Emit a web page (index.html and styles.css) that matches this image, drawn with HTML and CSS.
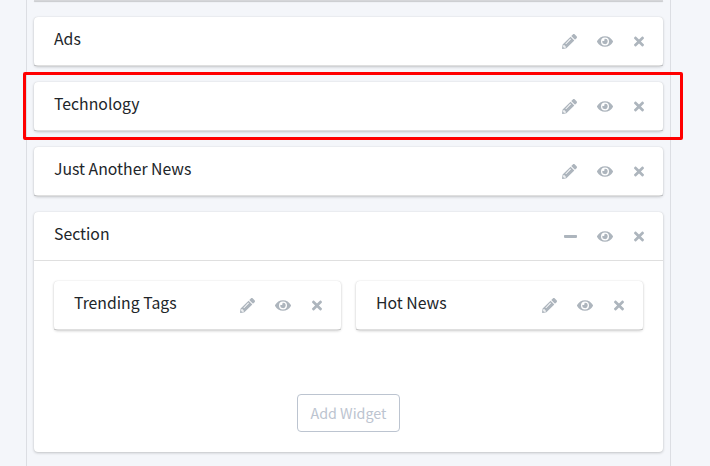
FILE: index.html
```html
<!DOCTYPE html>
<html lang="en">
<head>
<meta charset="utf-8">
<title>Widgets</title>
<link rel="stylesheet" href="styles.css">
</head>
<body>
<svg class="sprite" aria-hidden="true">
  <symbol id="pencil" viewBox="0 0 512 512"><path d="M497.9 142.1l-46.1 46.1c-4.7 4.7-12.3 4.7-17 0l-111-111c-4.7-4.7-4.7-12.3 0-17l46.1-46.1c18.7-18.7 49.1-18.7 67.9 0l60.1 60.1c18.8 18.7 18.8 49.1 0 67.9zM284.2 99.8L21.6 362.4.4 483.9c-2.9 16.4 11.4 30.6 27.8 27.8l121.5-21.3 262.6-262.6c4.7-4.7 4.7-12.3 0-17l-111-111c-4.8-4.7-12.4-4.7-17.1 0zM124.1 339.9c-5.5-5.5-5.5-14.3 0-19.8l154-154c5.5-5.5 14.3-5.5 19.8 0s5.5 14.3 0 19.8l-154 154c-5.5 5.5-14.3 5.5-19.8 0zM88 424h48v36.3l-64.5 11.3-31.1-31.1L51.7 376H88v48z"/></symbol>
  <symbol id="eye" viewBox="0 0 576 512"><path d="M572.52 241.4C518.29 135.59 410.93 64 288 64S57.68 135.64 3.48 241.41a32.35 32.35 0 0 0 0 29.19C57.71 376.41 165.07 448 288 448s230.32-71.64 284.52-177.41a32.35 32.35 0 0 0 0-29.19zM288 400a144 144 0 1 1 144-144 143.93 143.93 0 0 1-144 144zm0-240a95.31 95.31 0 0 0-25.31 3.79 47.85 47.85 0 0 1-66.9 66.9A95.78 95.78 0 1 0 288 160z"/></symbol>
  <symbol id="times" viewBox="0 0 352 512"><path d="M242.72 256l100.07-100.07c12.28-12.28 12.28-32.19 0-44.48l-22.24-22.24c-12.28-12.28-32.19-12.28-44.48 0L176 189.28 75.93 89.21c-12.28-12.28-32.19-12.28-44.48 0L9.21 111.45c-12.28 12.28-12.28 32.19 0 44.48L109.28 256 9.21 356.07c-12.28 12.28-12.28 32.19 0 44.48l22.24 22.24c12.28 12.28 32.2 12.28 44.48 0L176 322.72l100.07 100.07c12.28 12.28 32.2 12.28 44.48 0l22.24-22.24c12.28-12.28 12.28-32.19 0-44.48L242.72 256z"/></symbol>
  <symbol id="minus" viewBox="0 0 448 512"><path d="M416 208H32c-17.67 0-32 14.33-32 32v32c0 17.67 14.33 32 32 32h384c17.67 0 32-14.33 32-32v-32c0-17.67-14.33-32-32-32z"/></symbol>
</svg>
<main class="area">
  <div class="card card-cut"></div>
  <div class="card">
    <div class="card-header"><h3>Ads</h3>
      <div class="tools"><svg class="icon"><use href="#pencil"/></svg><svg class="icon icon-eye"><use href="#eye"/></svg><svg class="icon icon-times"><use href="#times"/></svg></div>
    </div>
  </div>
  <div class="card marked">
    <div class="card-header"><h3>Technology</h3>
      <div class="tools"><svg class="icon"><use href="#pencil"/></svg><svg class="icon icon-eye"><use href="#eye"/></svg><svg class="icon icon-times"><use href="#times"/></svg></div>
    </div>
  </div>
  <div class="card">
    <div class="card-header"><h3>Just Another News</h3>
      <div class="tools"><svg class="icon"><use href="#pencil"/></svg><svg class="icon icon-eye"><use href="#eye"/></svg><svg class="icon icon-times"><use href="#times"/></svg></div>
    </div>
  </div>
  <div class="card">
    <div class="card-header"><h3>Section</h3>
      <div class="tools"><svg class="icon icon-minus"><use href="#minus"/></svg><svg class="icon icon-eye"><use href="#eye"/></svg><svg class="icon icon-times"><use href="#times"/></svg></div>
    </div>
    <div class="card-body">
      <div class="columns">
        <div class="card">
          <div class="card-header"><h3>Trending Tags</h3>
            <div class="tools"><svg class="icon"><use href="#pencil"/></svg><svg class="icon icon-eye"><use href="#eye"/></svg><svg class="icon icon-times"><use href="#times"/></svg></div>
          </div>
        </div>
        <div class="card">
          <div class="card-header"><h3>Hot News</h3>
            <div class="tools"><svg class="icon"><use href="#pencil"/></svg><svg class="icon icon-eye"><use href="#eye"/></svg><svg class="icon icon-times"><use href="#times"/></svg></div>
          </div>
        </div>
      </div>
      <button class="add" type="button">Add Widget</button>
    </div>
  </div>
</main>
</body>
</html>
```
FILE: styles.css
```css
* { box-sizing: border-box; }

body {
  margin: 0;
  height: 466px;
  overflow: hidden;
  background: #f4f6fa;
  color: #212529;
  font-family: "Noto Sans CJK SC", "Open Sans", sans-serif;
}

.sprite { display: none; }

.area {
  display: flex;
  flex-direction: column;
  gap: 16px;
  width: 645px;
  height: 466px;
  margin-left: 26px;
  padding: 0 7px;
  border: solid #dcdee3;
  border-width: 0 1px;
}

.card {
  flex: none;
  position: relative;
  background: #fff;
  border-radius: 4px;
  box-shadow: 0 0 1px rgba(0, 0, 0, .125), 0 1px 3px rgba(0, 0, 0, .2);
}

.card-cut {
  height: 1px;
  background: #d5d6d9;
  border-radius: 0;
  box-shadow: 0 1px 1px rgba(0, 0, 0, .2);
}

.card-header {
  display: flex;
  justify-content: space-between;
  height: 49px;
  padding: 0 19px 0 20px;
  border-bottom: 1px solid rgba(0, 0, 0, .125);
}

.card-header h3 {
  margin: 0;
  font-size: 15.8px;
  font-weight: 400;
  line-height: 44px;
}

.tools {
  display: flex;
  align-items: center;
  gap: 21px;
  padding-top: 1px;
  color: #adb5bd;
}

.icon {
  display: block;
  width: 15px;
  height: 15px;
  margin-right: -1px;
  fill: currentColor;
}

.icon-eye { width: 16px; margin-right: 0; }
.icon-times { width: 10px; margin-right: 0; }
.icon-minus { width: 13px; margin-right: -1px; }

/* Red frame drawn around the highlighted widget */
.marked::after {
  content: "";
  position: absolute;
  z-index: 1;
  inset: -10px -20px -9px -11px;
  border: 3px solid #f00;
  border-radius: 2px;
}

.card-body {
  display: flex;
  flex-direction: column;
  align-items: center;
  gap: 64px;
  padding: 20px;
}

.columns {
  display: grid;
  grid-template-columns: 1fr 1fr;
  gap: 15px;
  width: 100%;
}

.add {
  width: 103px;
  height: 38px;
  padding: 0;
  border: 1px solid #bcc4d0;
  border-radius: 4px;
  background: #fff;
  color: #bcc4d0;
  font: 400 14.3px/36px "Noto Sans CJK SC", "Open Sans", sans-serif;
}
```
